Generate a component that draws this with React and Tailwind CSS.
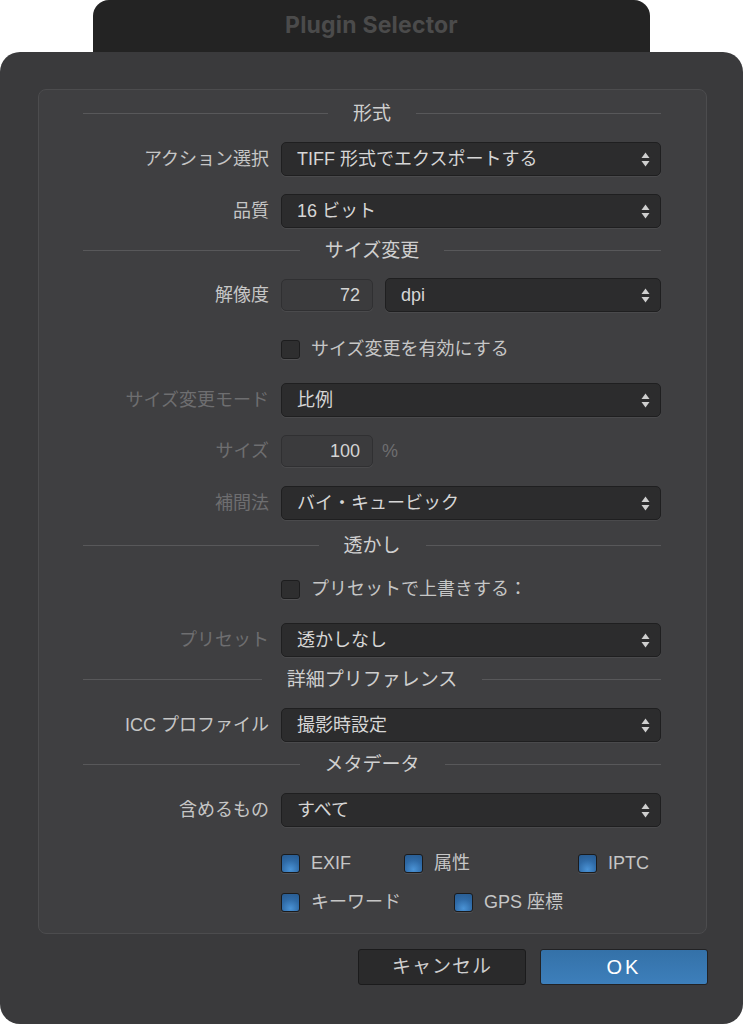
import React from "react";

const FONT = "font-['Liberation_Sans','Noto_Sans_CJK_JP',sans-serif]";

function Arrows() {
  return (
    <svg width="9" height="15" viewBox="0 0 9 15" className="shrink-0">
      <path d="M0.5 6 L4.5 0.5 L8.5 6 Z" fill="#cfcfcf" />
      <path d="M0.5 9 L8.5 9 L4.5 14.5 Z" fill="#cfcfcf" />
    </svg>
  );
}

function Select({ value, className = "" }) {
  return (
    <div
      className={`h-[34px] flex items-center justify-between pl-[15px] pr-[10px] rounded-[5px] bg-[#2c2c2d] border border-[#1f1f20] shadow-[0_1px_0_#4a4a4c] text-[18px] text-[#d6d6d6] ${className}`}
    >
      <span className="leading-none">{value}</span>
      <Arrows />
    </div>
  );
}

function NumInput({ value }) {
  return (
    <div className="w-[92px] h-[32px] flex items-center justify-end pr-[12px] rounded-[5px] bg-[#3b3b3d] border border-[#303032] shadow-[0_1px_0_#4a4a4c] text-[18px] text-[#d4d4d4] leading-none">
      {value}
    </div>
  );
}

function Header({ title, mt }) {
  return (
    <div className={`h-[24px] flex items-center gap-[25px] ${mt}`}>
      <div className="flex-1 h-px bg-[#58585a]" />
      <span className="text-[19px] text-[#cfcfcf] leading-none">{title}</span>
      <div className="flex-1 h-px bg-[#58585a]" />
    </div>
  );
}

function Row({ label, dim, mt, children }) {
  return (
    <div className={`flex items-center h-[34px] ${mt}`}>
      <div
        className={`w-[198px] shrink-0 pr-[12px] text-right text-[18px] leading-none whitespace-nowrap ${
          dim ? "text-[#6e6e70]" : "text-[#c6c6c6]"
        }`}
      >
        {label}
      </div>
      <div className="flex-1 flex items-center">{children}</div>
    </div>
  );
}

function Checkbox({ checked }) {
  return checked ? (
    <div className="w-[19px] h-[19px] shrink-0 rounded-[3px] border border-[#1b1b1c] bg-[radial-gradient(circle_at_50%_85%,#4a93d6_0%,#2f6aa6_55%,#285a8e_100%)] shadow-[0_1px_0_#505052]" />
  ) : (
    <div className="w-[19px] h-[19px] shrink-0 rounded-[3px] border border-[#1d1d1e] bg-[#2e2e2f] shadow-[0_1px_0_#505052]" />
  );
}

function CheckItem({ label, checked = true, w }) {
  return (
    <div className={`flex items-center gap-[11px] ${w}`}>
      <Checkbox checked={checked} />
      <span className="text-[18px] text-[#c6c6c6] leading-none whitespace-nowrap">{label}</span>
    </div>
  );
}

export default function App() {
  return (
    <div className={`w-[743px] h-[1024px] bg-white flex flex-col ${FONT}`}>
      <div className="ml-[93px] w-[557px] h-[52px] shrink-0 rounded-t-[16px] bg-[#232323] flex items-center justify-center">
        <span className="text-[23px] font-bold text-[#4b4b4b] font-['Inter','Liberation_Sans',sans-serif] tracking-[0.2px] mt-[-2px]">
          Plugin Selector
        </span>
      </div>
      <div className="flex-1 rounded-[20px] bg-[#3a3a3c] pt-[37px] pl-[38px] pr-[36px] flex flex-col">
        <div className="h-[845px] rounded-[8px] bg-[#3f3f41] border border-[#4c4c4e] pl-[44px] pr-[45px] flex flex-col">
          <Header title="形式" mt="mt-[11px]" />
          <Row label="アクション選択" mt="mt-[17px]">
            <Select value="TIFF 形式でエクスポートする" className="flex-1" />
          </Row>
          <Row label="品質" mt="mt-[18px]">
            <Select value="16 ビット" className="flex-1" />
          </Row>
          <Header title="サイズ変更" mt="mt-[10px]" />
          <Row label="解像度" mt="mt-[16px]">
            <NumInput value="72" />
            <Select value="dpi" className="flex-1 ml-[12px]" />
          </Row>
          <div className="h-[24px] mt-[25px] flex items-center pl-[198px]">
            <CheckItem label="サイズ変更を有効にする" checked={false} />
          </div>
          <Row label="サイズ変更モード" dim mt="mt-[22px]">
            <Select value="比例" className="flex-1" />
          </Row>
          <Row label="サイズ" dim mt="mt-[17px]">
            <NumInput value="100" />
            <span className="ml-[9px] text-[18px] text-[#6e6e70] leading-none">%</span>
          </Row>
          <Row label="補間法" dim mt="mt-[18px]">
            <Select value="バイ・キュービック" className="flex-1" />
          </Row>
          <Header title="透かし" mt="mt-[13px]" />
          <div className="h-[24px] mt-[20px] flex items-center pl-[198px]">
            <CheckItem label="プリセットで上書きする：" checked={false} />
          </div>
          <Row label="プリセット" dim mt="mt-[22px]">
            <Select value="透かしなし" className="flex-1" />
          </Row>
          <Header title="詳細プリファレンス" mt="mt-[10px]" />
          <Row label="ICC プロファイル" mt="mt-[17px]">
            <Select value="撮影時設定" className="flex-1" />
          </Row>
          <Header title="メタデータ" mt="mt-[10px]" />
          <Row label="含めるもの" mt="mt-[17px]">
            <Select value="すべて" className="flex-1" />
          </Row>
          <div className="h-[24px] mt-[24px] flex items-center pl-[198px]">
            <CheckItem label="EXIF" w="w-[123px]" />
            <CheckItem label="属性" w="w-[174px]" />
            <CheckItem label="IPTC" />
          </div>
          <div className="h-[24px] mt-[15px] flex items-center pl-[198px]">
            <CheckItem label="キーワード" w="w-[173px]" />
            <CheckItem label="GPS 座標" />
          </div>
        </div>
        <div className="mt-[15px] flex justify-end gap-[14px]">
          <div className="w-[168px] h-[36px] rounded-[3px] bg-[#2a2a2b] border border-[#1b1b1c] flex items-center justify-center text-[19px] text-[#cfcfcf] tracking-[1px]">
            キャンセル
          </div>
          <div className="w-[168px] h-[36px] rounded-[3px] bg-[linear-gradient(#3471a8,#3d7fbb)] border border-[#222224] flex items-center justify-center text-[20px] text-white tracking-[3px] mr-[-1px]">
            OK
          </div>
        </div>
      </div>
    </div>
  );
}
